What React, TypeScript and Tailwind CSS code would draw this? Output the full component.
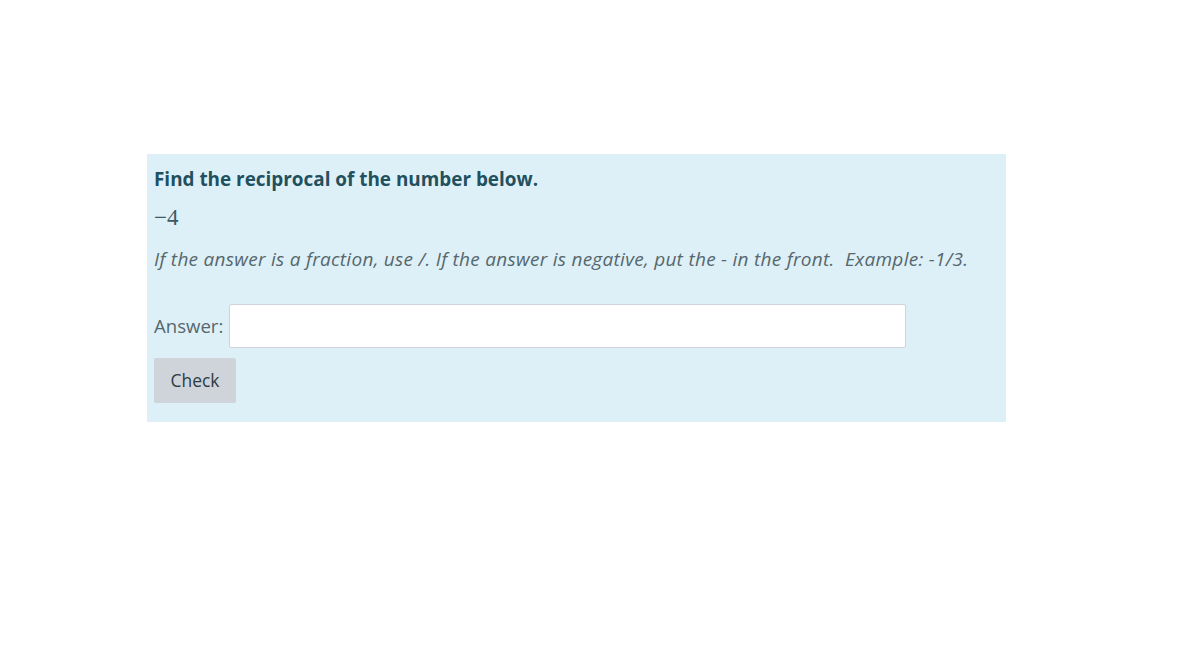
export default function App() {
  return (
    <div className="w-[1200px] h-[670px] bg-white overflow-hidden font-['Open_Sans',sans-serif]">
      <div className="ml-[147px] mt-[154px] w-[859px] h-[268px] bg-[#def0f7] px-[7px] pt-[12px]">
        <p className="text-[18.9px] leading-[27px] font-bold text-[#22505e]">
          Find the reciprocal of the number below.
        </p>
        <p className="mt-[10px] text-[23px] leading-[30px] text-[#3c5a64] font-['Liberation_Serif',serif]">
          −4
        </p>
        <p className="mt-[13px] text-[19px] leading-[27px] italic tracking-[0.28px] text-[#56676d]">
          If the answer is a fraction, use /. If the answer is negative, put the - in the front.&nbsp; Example: -1/3.
        </p>
        <div className="mt-[31px] flex items-center gap-[6px]">
          <span className="text-[18.6px] text-[#56676d]">Answer:</span>
          <input
            type="text"
            className="w-[677px] h-[44px] bg-white border border-[#ced4da] rounded-[2px] outline-none px-2"
          />
        </div>
        <button className="mt-[10px] w-[82px] h-[45px] bg-[#ced4da] text-[17.4px] text-[#2e3a40] rounded-[2px]">
          Check
        </button>
      </div>
    </div>
  );
}
